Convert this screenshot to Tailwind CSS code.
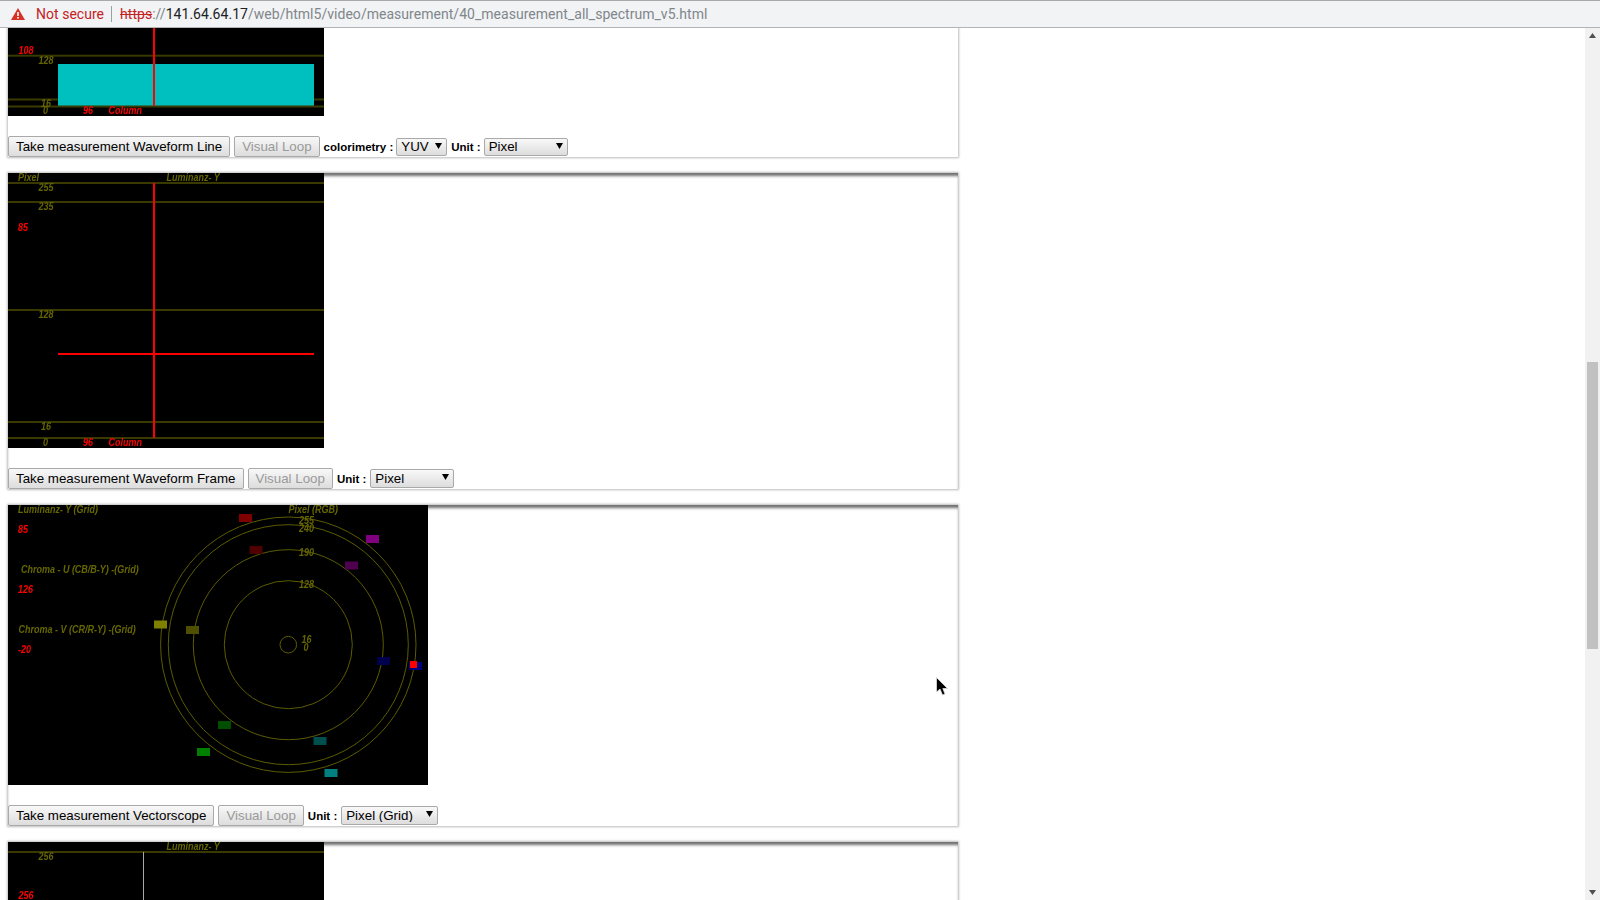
<!DOCTYPE html>
<html lang="en">
  <head>
    <meta charset="UTF-8" />
    <meta name="viewport" content="width=device-width, initial-scale=1.0" />
    <title>40_measurement_all_spectrum_v5</title>
    <script src="https://cdn.jsdelivr.net/npm/@tailwindcss/browser@4"></script>
  </head>
  <body class="h-[900px] w-[1600px] overflow-hidden bg-white font-['Liberation_Sans',sans-serif] text-black">
    <!-- address bar -->
    <header class="flex h-7 items-center border-t border-b border-t-[#a9a9a9] border-b-[#b4b4b4] bg-[#f1f3f4] pl-[11px] font-['Roboto',sans-serif] text-[14px] tracking-[0.03px]">
      <svg class="h-3 w-[14px]" viewBox="0 0 14 12"><path d="M7 0 14 12H0Z" fill="#d93025" /><rect x="6.2" y="4" width="1.6" height="4" fill="#fff" /><rect x="6.2" y="9" width="1.6" height="1.6" fill="#fff" /></svg>
      <span class="ml-[11px] text-[#c5221f]">Not secure</span>
      <span class="ml-[7px] mr-2 h-4 w-px bg-[#9aa0a6]"></span>
      <span class="text-[#c5221f] line-through">https</span><span class="text-[#80868b]">://</span><span class="text-[#202124]">141.64.64.17</span><span class="text-[#80868b]">/web/html5/video/measurement/40_measurement_all_spectrum_v5.html</span>
    </header>

    <div class="flex h-[872px]">
      <main class="h-full w-[1585px] overflow-hidden">
        <!-- Waveform Line -->
        <section class="ml-2 w-[950px] shadow-[0_0_2px_1px_#bcbcbc]">
          <svg class="blur-[0.3px] block h-[88px] w-[316px] bg-black text-[10px] font-bold italic" viewBox="0 0 316 88">
            <rect y="26.7" width="316" height="2" fill="#3a3a00" />
            <rect y="70.5" width="316" height="2" fill="#3a3a00" />
            <rect x="50" y="36" width="256" height="42" fill="#00bfbf" />
            <rect y="77.5" width="316" height="2" fill="#3a3a00" />
            <rect x="145" width="2" height="78" fill="#ff0000" />
            <g transform="scale(.9 1)">
              <g fill="#666600">
                <text x="33.9" y="36.5">128</text>
                <text x="36.7" y="79.5">16</text>
                <text x="38.9" y="86.5">0</text>
              </g>
              <g fill="#ff0000">
                <text x="11.7" y="26.5">108</text>
                <text x="83.3" y="86.5">96</text>
                <text x="111.7" y="86.5">Column</text>
              </g>
            </g>
          </svg>
          <div class="mt-5 flex h-[21px] items-center">
            <button class="h-[21px] rounded-[2px] border border-[#a9a9a9] bg-linear-to-b from-[#f8f8f8] to-[#dddddd] px-[7px] text-[13.33px] text-black">Take measurement Waveform Line</button>
            <button disabled class="ml-[4px] h-[21px] rounded-[2px] border border-[#a9a9a9] bg-linear-to-b from-[#f8f8f8] to-[#dddddd] px-[7px] text-[13.33px] text-[#9a9a9a]">Visual Loop</button>
            <label class="ml-1 mt-[2px] text-[11.5px] font-bold">colorimetry :</label>
            <span class="relative ml-[3px]">
              <select class="block h-[18px] w-[51px] appearance-none rounded-[2px] border border-[#a9a9a9] bg-linear-to-b from-[#f8f8f8] to-[#dddddd] pl-1 text-[13.33px] leading-none"><option>YUV</option></select>
              <svg class="absolute right-[5px] top-[5px] h-[6px] w-[7px]" viewBox="0 0 7 6"><path d="M0 0H7L3.5 6Z" fill="#000" /></svg>
            </span>
            <label class="ml-[4px] mt-[2px] text-[11.5px] font-bold">Unit :</label>
            <span class="relative ml-[3px]">
              <select class="block h-[18px] w-[84px] appearance-none rounded-[2px] border border-[#a9a9a9] bg-linear-to-b from-[#f8f8f8] to-[#dddddd] pl-1 text-[13.33px] leading-none"><option>Pixel</option></select>
              <svg class="absolute right-[5px] top-[5px] h-[6px] w-[7px]" viewBox="0 0 7 6"><path d="M0 0H7L3.5 6Z" fill="#000" /></svg>
            </span>
          </div>
        </section>

        <!-- Waveform Frame -->
        <section class="ml-2 mt-4 w-[950px] shadow-[0_0_2px_1px_#bcbcbc,inset_0_4px_3px_-1px_#707070]">
          <svg class="blur-[0.3px] block h-[275px] w-[316px] bg-black text-[10px] font-bold italic" viewBox="0 0 316 275">
            <rect y="9" width="316" height="2" fill="#3a3a00" />
            <rect y="28" width="316" height="2" fill="#3a3a00" />
            <rect y="136" width="316" height="2" fill="#3a3a00" />
            <rect y="248" width="316" height="2" fill="#3a3a00" />
            <rect y="264" width="316" height="2" fill="#3a3a00" />
            <rect x="145" y="10" width="2" height="255" fill="#ff0000" />
            <rect x="50" y="180" width="256" height="2" fill="#ff0000" />
            <g transform="scale(.9 1)">
              <g fill="#666600">
                <text x="11.1" y="8">Pixel</text>
                <text x="176.1" y="8">Luminanz- Y</text>
                <text x="33.9" y="18">255</text>
                <text x="33.9" y="37">235</text>
                <text x="33.9" y="145">128</text>
                <text x="36.7" y="257">16</text>
                <text x="38.9" y="273">0</text>
              </g>
              <g fill="#ff0000">
                <text x="11.1" y="58">85</text>
                <text x="83.3" y="273">96</text>
                <text x="111.7" y="273">Column</text>
              </g>
            </g>
          </svg>
          <div class="mt-5 flex h-[21px] items-center">
            <button class="h-[21px] rounded-[2px] border border-[#a9a9a9] bg-linear-to-b from-[#f8f8f8] to-[#dddddd] px-[7px] text-[13.33px] text-black">Take measurement Waveform Frame</button>
            <button disabled class="ml-[4px] h-[21px] rounded-[2px] border border-[#a9a9a9] bg-linear-to-b from-[#f8f8f8] to-[#dddddd] px-[7px] text-[13.33px] text-[#9a9a9a]">Visual Loop</button>
            <label class="ml-1 mt-[2px] text-[11.5px] font-bold">Unit :</label>
            <span class="relative ml-[4px]">
              <select class="block h-[19px] w-[84px] appearance-none rounded-[2px] border border-[#a9a9a9] bg-linear-to-b from-[#f8f8f8] to-[#dddddd] pl-1 text-[13.33px] leading-none"><option>Pixel</option></select>
              <svg class="absolute right-[5px] top-[5px] h-[6px] w-[7px]" viewBox="0 0 7 6"><path d="M0 0H7L3.5 6Z" fill="#000" /></svg>
            </span>
          </div>
        </section>

        <!-- Vectorscope -->
        <section class="ml-2 mt-4 w-[950px] shadow-[0_0_2px_1px_#bcbcbc,inset_0_4px_3px_-1px_#707070]">
          <svg class="blur-[0.3px] block h-[280px] w-[420px] bg-black text-[10px] font-bold italic" viewBox="0 0 420 280">
            <g fill="none" stroke="#5c5c00">
              <circle cx="280.3" cy="139.7" r="8.3" />
              <circle cx="280.3" cy="139.7" r="64" />
              <circle cx="280.3" cy="139.7" r="95" />
              <circle cx="280.3" cy="139.7" r="120" />
              <circle cx="280.3" cy="139.7" r="127.7" />
            </g>
            <rect x="231" y="9" width="13" height="8" fill="#7f0000" />
            <rect x="241.5" y="41" width="13" height="8" fill="#4f0000" />
            <rect x="358" y="30" width="13" height="8" fill="#800080" />
            <rect x="337" y="56.5" width="13" height="8" fill="#4f004f" />
            <rect x="146" y="115.5" width="13" height="8" fill="#808000" />
            <rect x="178" y="121" width="13" height="8" fill="#4f4f00" />
            <rect x="369" y="152" width="13" height="8" fill="#00004f" />
            <rect x="401" y="157" width="13" height="8" fill="#00007f" />
            <rect x="402" y="156" width="7" height="7" fill="#ff0000" />
            <rect x="210" y="216" width="13" height="8" fill="#004f00" />
            <rect x="189" y="243" width="13" height="8" fill="#008000" />
            <rect x="305.5" y="232" width="13" height="8" fill="#004f4f" />
            <rect x="316.5" y="264" width="13" height="8" fill="#008080" />
            <g transform="scale(.9 1)">
              <g fill="#666600">
                <text x="11.1" y="8">Luminanz- Y (Grid)</text>
                <text x="14.4" y="68.5">Chroma - U (CB/B-Y) -(Grid)</text>
                <text x="11.7" y="128.5">Chroma - V (CR/R-Y) -(Grid)</text>
                <text x="311.7" y="8">Pixel (RGB)</text>
                <text x="323.3" y="19.5">255</text>
                <text x="323.3" y="27">240</text>
                <text x="323.3" y="51.5">190</text>
                <text x="323.3" y="83">128</text>
                <text x="326.1" y="138">16</text>
                <text x="328.3" y="146">0</text>
              </g>
              <g fill="#ff0000">
                <text x="11.1" y="28.5">85</text>
                <text x="11.1" y="88.5">126</text>
                <text x="11.1" y="148.5">-20</text>
              </g>
            </g>
          </svg>
          <div class="mt-5 flex h-[21px] items-center">
            <button class="h-[21px] rounded-[2px] border border-[#a9a9a9] bg-linear-to-b from-[#f8f8f8] to-[#dddddd] px-[7px] text-[13.33px] text-black">Take measurement Vectorscope</button>
            <button disabled class="ml-[4px] h-[21px] rounded-[2px] border border-[#a9a9a9] bg-linear-to-b from-[#f8f8f8] to-[#dddddd] px-[7px] text-[13.33px] text-[#9a9a9a]">Visual Loop</button>
            <label class="ml-1 mt-[2px] text-[11.5px] font-bold">Unit :</label>
            <span class="relative ml-[4px]">
              <select class="block h-[19px] w-[97px] appearance-none rounded-[2px] border border-[#a9a9a9] bg-linear-to-b from-[#f8f8f8] to-[#dddddd] pl-1 text-[13.33px] leading-none"><option>Pixel (Grid)</option></select>
              <svg class="absolute right-[5px] top-[5px] h-[6px] w-[7px]" viewBox="0 0 7 6"><path d="M0 0H7L3.5 6Z" fill="#000" /></svg>
            </span>
          </div>
        </section>

        <!-- next card, cut off by the window -->
        <section class="ml-2 mt-4 h-[275px] w-[950px] shadow-[0_0_2px_1px_#bcbcbc,inset_0_4px_3px_-1px_#707070]">
          <svg class="blur-[0.3px] block h-[275px] w-[316px] bg-black text-[10px] font-bold italic" viewBox="0 0 316 275">
            <rect y="9" width="316" height="2" fill="#3a3a00" />
            <rect x="135" y="10" width="1" height="255" fill="#a8a8a8" />
            <g transform="scale(.9 1)">
              <text x="176.1" y="8" fill="#666600">Luminanz- Y</text>
              <text x="33.9" y="18" fill="#666600">256</text>
              <text x="11.7" y="57" fill="#ff0000">256</text>
            </g>
          </svg>
        </section>
      </main>

      <!-- scrollbar -->
      <aside class="flex h-full w-[15px] flex-col items-center justify-between bg-[#f1f1f1] py-[5px]">
        <svg class="h-[5px] w-[7px]" viewBox="0 0 7 5"><path d="M3.5 0 7 5H0Z" fill="#505050" /></svg>
        <svg class="h-[5px] w-[7px]" viewBox="0 0 7 5"><path d="M0 0H7L3.5 5Z" fill="#505050" /></svg>
      </aside>
    </div>

    <!-- scrollbar thumb and mouse pointer sit on top of the page -->
    <div class="absolute left-[1587px] top-[362px] h-[287px] w-[11px] bg-[#c1c1c1]"></div>
    <svg class="absolute left-[936px] top-[677px] h-5 w-[14px]" viewBox="0 0 14 20"><path d="M0.5 0.5V15L4 12L6.5 18L9 17L6.8 11.5H11.5Z" fill="#000" stroke="#ddd" stroke-width="0.8" /></svg>
  </body>
</html>
